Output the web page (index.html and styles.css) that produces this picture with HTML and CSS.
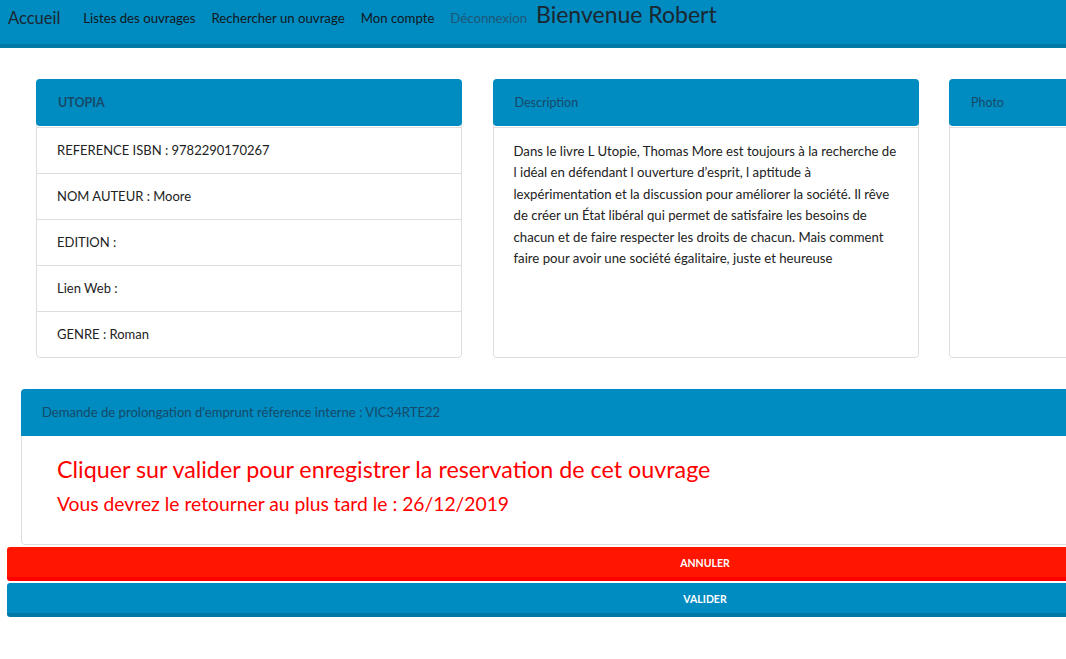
FILE: index.html
```html
<!DOCTYPE html>
<html lang="fr">
<head>
<meta charset="utf-8">
<title>Utopia</title>
<link rel="stylesheet" href="styles.css">
</head>
<body>
<nav class="navbar">
  <a class="brand" href="#">Accueil</a>
  <a class="nav-link" href="#">Listes des ouvrages</a>
  <a class="nav-link" href="#">Rechercher un ouvrage</a>
  <a class="nav-link" href="#">Mon compte</a>
  <a class="nav-link muted" href="#">Déconnexion</a>
  <span class="welcome">Bienvenue Robert</span>
</nav>
<main class="container">
  <div class="cards">
    <section class="card">
      <header class="card-head bold">UTOPIA</header>
      <ul class="list">
        <li>REFERENCE ISBN : 9782290170267</li>
        <li>NOM AUTEUR : Moore</li>
        <li>EDITION :</li>
        <li>Lien Web :</li>
        <li>GENRE : Roman</li>
      </ul>
    </section>
    <section class="card">
      <header class="card-head">Description</header>
      <div class="card-body">
        <p class="desc">Dans le livre L Utopie, Thomas More est toujours à la recherche de l idéal en défendant l ouverture d’esprit, l aptitude à lexpérimentation et la discussion pour améliorer la société. Il rêve de créer un État libéral qui permet de satisfaire les besoins de chacun et de faire respecter les droits de chacun. Mais comment faire pour avoir une société égalitaire, juste et heureuse</p>
      </div>
    </section>
    <section class="card">
      <header class="card-head">Photo</header>
      <div class="card-body"></div>
    </section>
  </div>
  <section class="panel">
    <header class="panel-head">Demande de prolongation d'emprunt réference interne : VIC34RTE22</header>
    <div class="panel-body">
      <p class="msg-big">Cliquer sur valider pour enregistrer la reservation de cet ouvrage</p>
      <p class="msg">Vous devrez le retourner au plus tard le : 26/12/2019</p>
    </div>
  </section>
  <button class="btn btn-red">ANNULER</button>
  <button class="btn btn-blue">VALIDER</button>
</main>
</body>
</html>
```
FILE: styles.css
```css
html, body {
  margin: 0;
  padding: 0;
  overflow: hidden;
  background: #fff;
}
body {
  font-family: Lato, "Open Sans", sans-serif;
  color: #222;
  width: 1066px;
  height: 659px;
}
.navbar {
  display: flex;
  align-items: flex-start;
  height: 44px;
  background: #008bc1;
  border-bottom: 4px solid #007aa5;
  padding-left: 8px;
  white-space: nowrap;
}
.navbar a {
  text-decoration: none;
}
.brand {
  font-size: 16.5px;
  color: #1b2730;
  line-height: 20px;
  margin-top: 8px;
  margin-right: 23px;
}
.nav-link {
  font-size: 13.2px;
  color: #101820;
  line-height: 18px;
  margin-top: 9px;
  margin-right: 16px;
}
.nav-link.muted {
  color: #1d5877;
  margin-right: 9px;
}
.welcome {
  font-size: 23px;
  color: #1b2730;
  line-height: 28px;
  margin-top: 0;
}
.container {
  margin-left: 7px;
  width: 1396px;
  padding-top: 31px;
}
.cards {
  display: flex;
  gap: 30.5px;
  padding-left: 29px;
}
.card {
  width: 426px;
  box-sizing: border-box;
  border: 1px solid #dedede;
  border-radius: 4px;
  display: flex;
  flex-direction: column;
}
.card-head {
  height: 47px;
  box-sizing: border-box;
  background: #008bc1;
  border-radius: 4px;
  margin: -1px -1px 1px -1px;
  padding-left: 22px;
  line-height: 47px;
  font-size: 12.5px;
  color: #164a68;
}
.card-head.bold {
  font-weight: 700;
}
.list {
  list-style: none;
  margin: 0;
  padding: 0;
}
.list li {
  height: 46px;
  box-sizing: border-box;
  border-top: 1px solid #dedede;
  padding-left: 20px;
  line-height: 45px;
  font-size: 13px;
  color: #222;
}
.card-body {
  flex: 1;
  border-top: 1px solid #dedede;
  padding: 13px 20px;
}
.desc {
  margin: 0;
  font-size: 13.2px;
  line-height: 21.4px;
  color: #222;
}
.panel {
  margin: 31px 0 0 14px;
  border: 1px solid #dedede;
  border-radius: 4px;
}
.panel-head {
  height: 47px;
  background: #008bc1;
  border-radius: 4px 4px 0 0;
  margin: -1px -1px 0 -1px;
  padding-left: 21px;
  line-height: 47px;
  font-size: 13.1px;
  color: #164a68;
}
.panel-body {
  padding: 19px 35px 28px;
}
.msg-big {
  margin: 0;
  font-size: 23.3px;
  line-height: 29px;
  color: #ff0000;
}
.msg {
  margin: 8px 0 0;
  font-size: 19.3px;
  line-height: 24px;
  color: #ff0000;
}
.btn {
  display: block;
  width: 1396px;
  height: 34px;
  border: 0;
  border-radius: 3px;
  font-family: Lato, sans-serif;
  font-weight: 700;
  font-size: 10.5px;
  color: #fff;
  cursor: pointer;
  padding: 1px 0 0;
}
.btn-red {
  margin-top: 2px;
  background: #ff1500;
  border-bottom: 4px solid #ff0000;
}
.btn-blue {
  margin-top: 2px;
  background: #008bc1;
  border-bottom: 4px solid #007aa5;
}
```
